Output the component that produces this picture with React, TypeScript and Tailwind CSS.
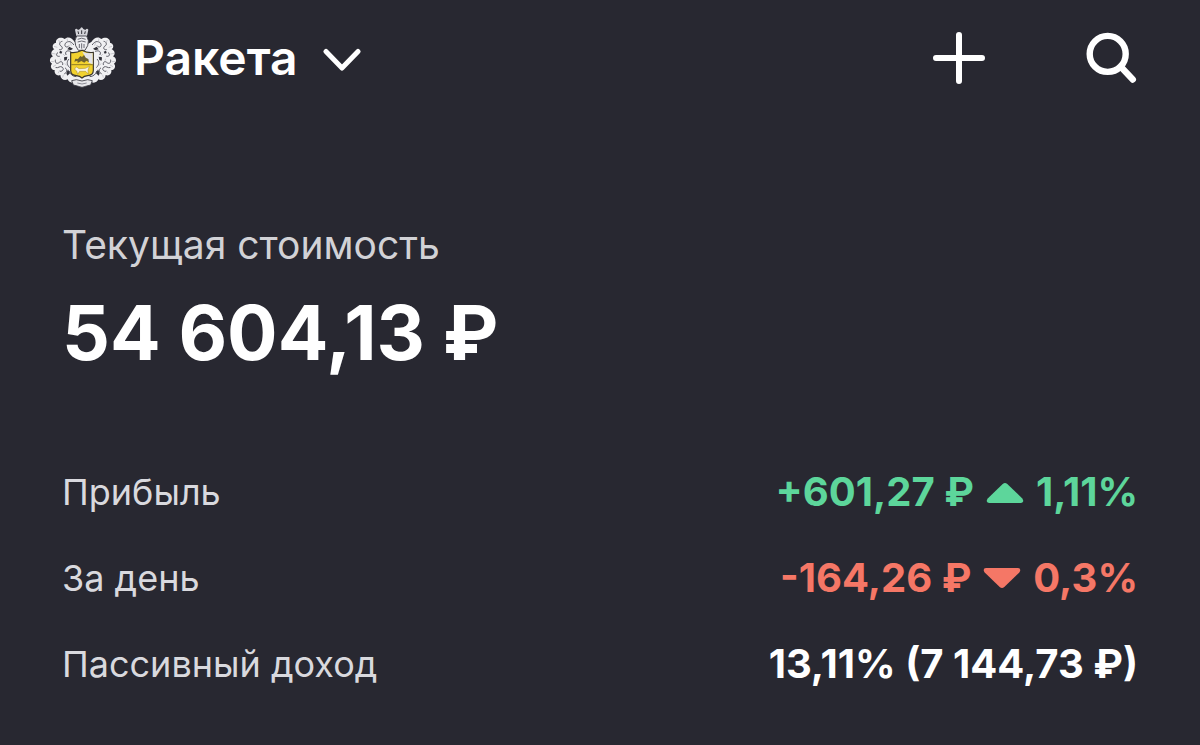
import type { ReactNode } from "react";

type Trend = "up" | "down";

function MantleHalf() {
  return (
    <>
      <path
        fill="#f0f0f2"
        d="M104 66 C97 52 82 48 74 57 C63 48 46 55 48 68 C37 70 35 82 43 88 C33 92 31 104 39 109 C28 114 27 126 36 131 C29 138 34 150 44 150 C42 162 52 169 61 165 C62 178 74 184 83 178 C87 188 96 190 104 186 L130 192 L130 80 Z"
      />
      <g fill="none" stroke="#5b5b64" strokeWidth="3" strokeLinecap="round">
        <path d="M101 74 C92 60 78 63 75 73 C73 81 82 84 86 78" />
        <path d="M66 64 C58 65 56 74 63 78 C70 82 67 91 59 89" />
        <path d="M91 94 C81 89 73 96 78 104" />
        <path d="M53 98 C46 103 50 111 58 109" />
        <path d="M46 120 C44 130 52 133 58 127 C64 122 70 127 68 134" />
        <path d="M86 118 C78 126 82 136 88 142" />
        <path d="M48 143 C56 145 59 137 66 141 C74 146 68 155 61 154" />
        <path d="M76 144 C83 149 81 158 74 161" />
        <path d="M88 154 C90 163 99 170 108 170" />
      </g>
      {/* openings between the leaves */}
      <g fill="#32323a">
        <path d="M88 80 L99 86 L92 91 L82 88 Z" />
        <path d="M72 112 L82 110 L80 120 L73 122 Z" />
        <path d="M84 148 L90 160 L82 167 L79 160 Z" />
        <path d="M60 92 L67 95 L64 101 L58 99 Z" />
      </g>
      <g fill="none" stroke="#b5b5bc" strokeWidth="2">
        <path d="M56 60 L61 71 M81 55 L84 69 M42 79 L52 82 M36 100 L47 102 M33 124 L42 125 M39 140 L48 135 M54 160 L60 150 M68 173 L70 164" />
        <path d="M69 102 L76 109 M61 116 L63 122 M74 131 L81 136 M91 66 L94 77" />
      </g>
    </>
  );
}

function Crest() {
  return (
    <svg viewBox="24 21 210 186" className="h-[62px] w-[70px] shrink-0" aria-hidden="true">
      <MantleHalf />
      <g transform="translate(258 0) scale(-1 1)">
        <MantleHalf />
      </g>
      {/* crown */}
      <path
        fill="#d4d4d9"
        d="M105 29 Q109 23 114 30 L120 27 Q125 17 130 27 L136 30 Q141 23 145 29 L141 48 H109 Z"
      />
      <path fill="none" stroke="#32323a" strokeWidth="3" d="M114 34 L116 42 M125 31 V42 M136 34 L134 42" />
      {/* helmet */}
      <path
        fill="#ededf0"
        stroke="#34343c"
        strokeWidth="2.5"
        d="M110 48 H140 Q149 62 143 77 L135 91 H115 L107 77 Q101 62 110 48 Z"
      />
      <path fill="none" stroke="#6b6b74" strokeWidth="3" d="M113 58 Q125 51 137 58 M113 66 Q125 60 137 66 M118 72 V84 M125 70 V86 M132 72 V84" />
      {/* shield */}
      <path
        fill="#f2d22e"
        stroke="#39352b"
        strokeWidth="3.5"
        d="M92 97 Q108 100 126 91 Q144 100 160 97 V151 Q160 166 143 167 Q132 168 126 174 Q120 168 109 167 Q92 166 92 151 Z"
      />
      <path fill="#e3e3e8" d="M127 95 Q143 101 158 99 V133 L146 128 L134 108 Z" />
      <path fill="none" stroke="#7d6c22" strokeWidth="2.5" d="M94 134 H158" />
      <path
        fill="#6d6230"
        d="M103 125 L106 116 L114 117 L121 108 L126 111 L132 105 L137 113 L145 117 L147 127 L139 122 L133 128 L124 123 L113 129 L112 122 Z"
      />
      <path
        fill="#f8f4e2"
        stroke="#a08728"
        strokeWidth="1.5"
        d="M103 147 L110 141 L117 146 L136 145 L148 139 L144 151 L145 162 L137 154 L119 154 L113 163 L110 153 Z"
      />
      {/* motto ribbon */}
      <path
        fill="#e7e7ea"
        stroke="#34343c"
        strokeWidth="2.5"
        d="M95 182 L109 179 Q126 187 143 179 L157 182 L152 195 L140 198 Q126 206 112 198 L100 195 Z"
      />
      <path fill="none" stroke="#8d8d96" strokeWidth="3" d="M112 189 Q126 195 140 189" />
    </svg>
  );
}

function TrendIcon({ trend }: { trend: Trend }) {
  return (
    <svg viewBox="0 0 38 22" className="h-[22px] w-[38px]" aria-hidden="true">
      <path
        fill="currentColor"
        d={
          trend === "up"
            ? "M16.7 2.9 Q19 1.1 21.3 2.9 L36.3 17.5 Q38.8 21.5 35 22 H3 Q-.8 21.5 1.7 17.5 Z"
            : "M16.7 20.1 Q19 21.9 21.3 20.1 L36.3 5.5 Q38.8 1.5 35 1 H3 Q-.8 1.5 1.7 5.5 Z"
        }
      />
    </svg>
  );
}

function Row({ label, children }: { label: string; children: ReactNode }) {
  return (
    <div className="flex h-[86px] items-center justify-between">
      <dt className="text-[36px] text-[#d9d9de]">{label}</dt>
      <dd className="flex items-center text-[40px] font-bold">{children}</dd>
    </div>
  );
}

export default function App() {
  return (
    <main className="min-h-screen bg-[#282831] pb-9 font-['Inter',sans-serif] whitespace-nowrap text-white">
      <header className="flex h-[116px] items-center justify-between pr-[62px] pl-12">
        <button type="button" className="flex items-center">
          <Crest />
          <span className="ml-4 text-[48px] leading-[56px] font-semibold">Ракета</span>
          <svg
            viewBox="0 0 40 26"
            className="ml-6 h-[26px] w-10"
            fill="none"
            stroke="currentColor"
            strokeWidth="5"
            strokeLinecap="round"
            strokeLinejoin="round"
            aria-hidden="true"
          >
            <path d="M4 6.5 L20 23 L36 6.5" />
          </svg>
        </button>
        <div className="flex items-center gap-[99px]">
          <button type="button" aria-label="Добавить">
            <svg
              viewBox="0 0 54 54"
              className="size-[54px]"
              fill="none"
              stroke="currentColor"
              strokeWidth="6"
              strokeLinecap="round"
              aria-hidden="true"
            >
              <path d="M27 4 V50 M4 27 H50" />
            </svg>
          </button>
          <button type="button" aria-label="Поиск">
            <svg
              viewBox="0 0 53 54"
              className="h-[54px] w-[53px]"
              fill="none"
              stroke="currentColor"
              strokeWidth="6.4"
              strokeLinecap="round"
              aria-hidden="true"
            >
              <circle cx="22.7" cy="22.9" r="18" />
              <path d="M36 36 L47.8 48.5" />
            </svg>
          </button>
        </div>
      </header>

      <section className="px-[62px] pt-[105px]">
        <h1 className="text-[39px] leading-[48px] text-[#d2d2d6]">Текущая стоимость</h1>
        <p className="mt-4 text-[75px] leading-[96px] font-bold">54 604,13 ₽</p>
      </section>

      <dl className="mt-[68px] px-[62px]">
        <Row label="Прибыль">
          <span className="flex items-center gap-3 text-[#5dd69b]">
            +601,27 ₽
            <TrendIcon trend="up" />
            1,11%
          </span>
        </Row>
        <Row label="За день">
          <span className="flex items-center gap-3 text-[#f57766]">
            -164,26 ₽
            <TrendIcon trend="down" />
            0,3%
          </span>
        </Row>
        <Row label="Пассивный доход">13,11% (7 144,73 ₽)</Row>
      </dl>
    </main>
  );
}
